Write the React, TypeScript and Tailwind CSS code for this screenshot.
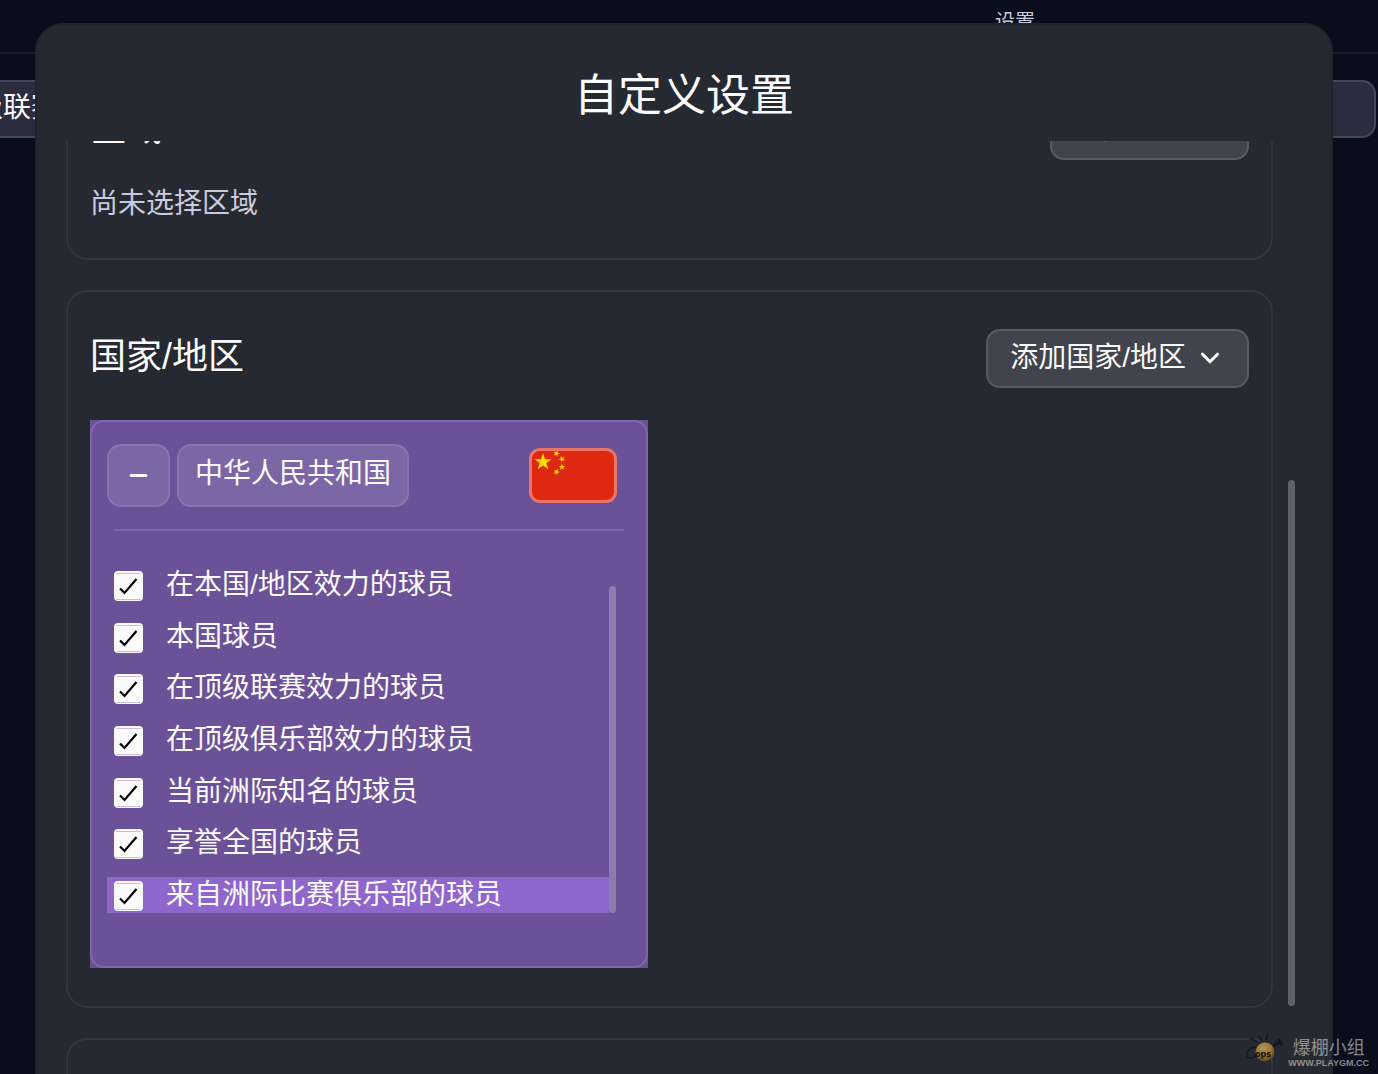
import { ChevronDown, Minus } from 'lucide-react'

const PLAYER_OPTIONS = [
  '在本国/地区效力的球员',
  '本国球员',
  '在顶级联赛效力的球员',
  '在顶级俱乐部效力的球员',
  '当前洲际知名的球员',
  '享誉全国的球员',
  '来自洲际比赛俱乐部的球员',
]

function Star({ x, y, r, turn = 0 }: { x: number; y: number; r: number; turn?: number }) {
  return (
    <polygon
      points="0,-10 2.25,-3.09 9.51,-3.09 3.63,1.18 5.88,8.09 0,3.82 -5.88,8.09 -3.63,1.18 -9.51,-3.09 -2.25,-3.09"
      transform={`translate(${x} ${y}) rotate(${turn}) scale(${r / 10})`}
    />
  )
}

function ChinaFlag() {
  return (
    <svg
      viewBox="0 0 82 49"
      className="h-[55px] w-[88px] rounded-[11px] border-[3px] border-[#eb7567] bg-[#de2910]"
      role="img"
      aria-label="中华人民共和国"
    >
      <g fill="#ffde00">
        <Star x={11} y={11} r={9} />
        <Star x={24.5} y={2.5} r={3.5} turn={20} />
        <Star x={30} y={8} r={3.5} turn={45} />
        <Star x={30} y={16} r={3.5} />
        <Star x={24.5} y={21} r={3.5} turn={20} />
      </g>
    </svg>
  )
}

function PlayerOption({ label, active }: { label: string; active: boolean }) {
  return (
    <label className={`flex h-9 items-center gap-[23px] pt-[2px] pl-[7px] ${active ? 'bg-[#8e66cc]' : ''}`}>
      <span className="grid shrink-0">
        <input
          type="checkbox"
          defaultChecked
          className="peer col-start-1 row-start-1 h-[30px] w-[29px] appearance-none rounded bg-[#fafafa]"
        />
        <svg
          viewBox="0 0 29 30"
          fill="none"
          stroke="#000"
          strokeWidth="2.2"
          className="pointer-events-none invisible col-start-1 row-start-1 h-[30px] w-[29px] peer-checked:visible"
        >
          <path d="M2.5 2.5h24M2.5 28.5h24" stroke="#c9bfdb" strokeWidth="1" />
          <path d="M6 17.5l4.5 4.5L22.5 8" />
        </svg>
      </span>
      <span className="pb-[2px] text-[28px] leading-8 whitespace-nowrap">{label}</span>
    </label>
  )
}

function CountryCard() {
  return (
    <div className="w-[558px] bg-[#6b5197]">
      <div className="rounded-[14px] border-2 border-[#8068a8] pt-[22px] pr-[22px] pb-[53px] pl-[15px]">
        <div className="flex items-center gap-[7px] pr-[7px]">
          <button
            type="button"
            aria-label="移除"
            className="flex h-[63px] w-[63px] items-center justify-center rounded-[14px] border-2 border-[#8b74ae] bg-[#7d66a5]"
          >
            <Minus size={25} strokeWidth={3} />
          </button>
          <button
            type="button"
            className="h-[63px] rounded-[14px] border-2 border-[#8b74ae] bg-[#7d66a5] px-4 pb-1 text-[28px]"
          >
            中华人民共和国
          </button>
          <div className="ml-auto">
            <ChinaFlag />
          </div>
        </div>
        <hr className="mt-[22px] ml-[7px] border-t-2 border-[#8068a8]" />
        <div className="mt-9 flex pr-2">
          <div className="flex h-[346px] flex-1 flex-col justify-between">
            {PLAYER_OPTIONS.map((label, i) => (
              <PlayerOption key={label} label={label} active={i === PLAYER_OPTIONS.length - 1} />
            ))}
          </div>
          <div className="mt-[19px] w-[7px] rounded-full bg-[#8f7baf]" />
        </div>
      </div>
    </div>
  )
}

function SectionHeader({ title, action }: { title: string; action: string }) {
  return (
    <div className="flex items-center justify-between">
      <h2 className="pb-1 text-[36px] leading-10">{title}</h2>
      <button
        type="button"
        className="flex h-[59px] items-center gap-[9px] rounded-[14px] border-2 border-[#575b66] bg-[#41444d] px-[22px] pb-[2px] text-[28px]"
      >
        <span>{action}</span>
        <ChevronDown size={30} strokeWidth={2.5} />
      </button>
    </div>
  )
}

function Backdrop() {
  return (
    <div className="h-full">
      <div className="flex h-[54px] items-start justify-end border-b-2 border-[#1a1f2d] pt-2 pr-[343px] text-[20px] leading-7 text-[#c9cbdc]">
        设置
      </div>
      <div className="mt-[26px] mr-[2px] -ml-[27px] flex h-[58px] items-center rounded-[14px] border-2 border-[#44465a] bg-[#2b2c3e] pb-[2px] text-[28px]">
        级联赛
      </div>
    </div>
  )
}

function Watermark() {
  return (
    <div className="pointer-events-none absolute right-[9px] bottom-1 flex items-center gap-1 opacity-60">
      <svg viewBox="0 0 38 38" className="h-[38px] w-[38px]">
        <defs>
          <radialGradient id="ball" cx="40%" cy="30%" r="75%">
            <stop offset="0" stopColor="#ffe680" />
            <stop offset="0.6" stopColor="#f0a020" />
            <stop offset="1" stopColor="#6b4408" />
          </radialGradient>
        </defs>
        <g stroke="#0b0d10" fill="none">
          <path d="M4 6l7 4M13 4l3 5M22 1l-2 7" strokeWidth="1.5" />
          <path d="M27 14l8-5M32 7l4 6" strokeWidth="3" />
          <path d="M11 15c-8 0-12 6-9 10 2 2 5 1 8-1" strokeWidth="1.5" />
        </g>
        <circle cx="19" cy="20" r="9.5" fill="url(#ball)" />
        <text x="17" y="25" textAnchor="middle" fontSize="8" fontWeight="bold" className="font-['DejaVu_Sans']">
          ops
        </text>
      </svg>
      <div className="pt-1 text-center text-[#d5d5d5]">
        <div className="text-[18px] leading-5">爆棚小组</div>
        <div className="font-['Liberation_Sans'] text-[9px] leading-[10px] font-bold">WWW.PLAYGM.CC</div>
      </div>
    </div>
  )
}

export default function App() {
  return (
    <div className="relative h-screen overflow-hidden bg-[#080e1b] font-['Liberation_Sans','Noto_Sans_CJK_SC',sans-serif] text-[#fafafa]">
      <Backdrop />
      <div
        role="dialog"
        aria-labelledby="dialog-title"
        className="absolute top-[23px] right-[45px] bottom-0 left-[35px] flex flex-col rounded-t-[28px] border-2 border-b-0 border-[#202329] bg-[#252931]"
      >
        <h1 id="dialog-title" className="h-[116px] shrink-0 pt-[43px] text-center text-[44px] leading-[56px]">
          自定义设置
        </h1>
        <div className="flex min-h-0 flex-1 gap-[15px] overflow-hidden pr-9 pl-[29px]">
          {/* list is scrolled down part of the way */}
          <div className="-mt-[79px] flex flex-1 flex-col gap-[30px]">
            <section className="h-[198px] shrink-0 rounded-[22px] border-2 border-[#33363f] px-[22px] pt-[37px]">
              <SectionHeader title="区域" action="添加区域" />
              <p className="mt-7 text-[28px] leading-8 text-[#c9cbdc]">尚未选择区域</p>
            </section>
            <section className="shrink-0 rounded-[22px] border-2 border-[#33363f] px-[22px] pt-[37px] pb-[38px]">
              <SectionHeader title="国家/地区" action="添加国家/地区" />
              <div className="mt-8">
                <CountryCard />
              </div>
            </section>
            <section className="h-[198px] shrink-0 rounded-[22px] border-2 border-[#33363f]" />
          </div>
          <div className="mt-[339px] mb-[68px] w-[7px] rounded-full bg-[#5f626a]" />
        </div>
      </div>
      <Watermark />
    </div>
  )
}
